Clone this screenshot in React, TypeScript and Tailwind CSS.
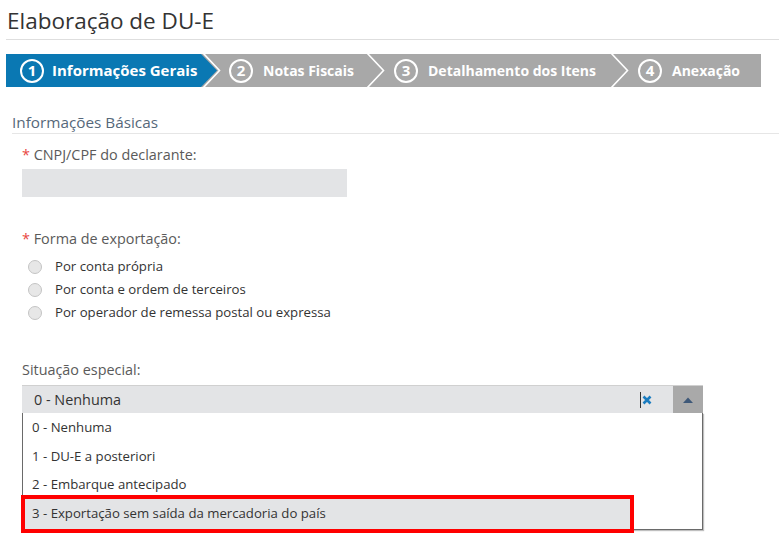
import React from 'react';

const steps = [
  { n: 1, label: 'Informações Gerais' },
  { n: 2, label: 'Notas Fiscais' },
  { n: 3, label: 'Detalhamento dos Itens' },
  { n: 4, label: 'Anexação' },
];

const formas = [
  'Por conta própria',
  'Por conta e ordem de terceiros',
  'Por operador de remessa postal ou expressa',
];

const opcoes = ['0 - Nenhuma', '1 - DU-E a posteriori', '2 - Embarque antecipado'];

function StepCircle({ n }: { n: number }) {
  return (
    <span className="flex h-[24px] w-[24px] shrink-0 items-center justify-center rounded-full border-2 border-white text-[15px] font-bold leading-none">
      {n}
    </span>
  );
}

function Chevron({ first }: { first?: boolean }) {
  return (
    <svg width={first ? 21 : 20} height={33} viewBox={`0 0 ${first ? 21 : 20} 33`} className="shrink-0">
      {first && <polygon points="0,0 16,16.5 0,33" fill="#0a78b3" />}
      <polyline
        points={first ? '2,-1 18.5,16.5 2,34' : '1,-1 17.5,16.5 1,34'}
        fill="none"
        stroke="#ffffff"
        strokeWidth={1.6}
      />
    </svg>
  );
}

export default function App() {
  return (
    <div className="min-h-[533px] w-[779px] overflow-hidden bg-white font-['Open_Sans',sans-serif]">
      {/* title */}
      <div className="ml-[6px] h-[40px] border-b border-[#dedede] pl-[1px] pt-[6px] text-[22.5px] leading-[30px] text-[#333333]">
        Elaboração de DU-E
      </div>

      {/* stepper */}
      <div className="ml-[6px] mt-[14px] flex h-[33px] w-[755px] bg-[#a8a8a8] text-[14px] font-bold text-white">
        <div className="flex w-[195px] items-center gap-[8px] bg-[#0a78b3] pl-[14px]">
          <StepCircle n={1} />
          <span className="text-[15px]">{steps[0].label}</span>
        </div>
        <Chevron first />
        <div className="flex w-[144px] items-center gap-[10px] pl-[7px]">
          <StepCircle n={2} />
          <span>{steps[1].label}</span>
        </div>
        <Chevron />
        <div className="flex w-[224px] items-center gap-[10px] pl-[8px]">
          <StepCircle n={3} />
          <span>{steps[2].label}</span>
        </div>
        <Chevron />
        <div className="flex flex-1 items-center gap-[10px] pl-[8px]">
          <StepCircle n={4} />
          <span>{steps[3].label}</span>
        </div>
      </div>

      {/* section */}
      <div className="ml-[12px] mt-[25px] border-b border-[#e6e6e6] pb-[1px] text-[15.3px] leading-[20px] text-[#56687a]">
        Informações Básicas
      </div>

      <div className="ml-[22px]">
        <div className="mt-[11px] text-[14.4px] leading-[20px] text-[#5a5a5a]">
          <span className="text-[#e8463f]">*</span> CNPJ/CPF do declarante:
        </div>
        <div className="mt-[4px] h-[28px] w-[325px] bg-[#e3e4e6]" />

        <div className="mt-[32px] text-[14.4px] leading-[20px] text-[#5a5a5a]">
          <span className="text-[#e8463f]">*</span> Forma de exportação:
        </div>
        <div className="mt-[6px]">
          {formas.map((f) => (
            <div key={f} className="flex h-[23px] items-center text-[13.2px] text-[#333333]">
              <span className="ml-[6px] h-[14px] w-[14px] rounded-full border border-[#c4c4c4] bg-[#e7e7e7]" />
              <span className="ml-[13px]">{f}</span>
            </div>
          ))}
        </div>

        <div className="mt-[36px] text-[14.4px] leading-[20px] text-[#5a5a5a]">Situação especial:</div>

        {/* select */}
        <div className="mt-[5px] flex h-[28px] w-[681px] items-stretch border-t border-[#d0d0d0] bg-[#e3e4e6]">
          <div className="flex flex-1 items-center pl-[12px] text-[14.4px] text-[#333333]">0 - Nenhuma</div>
          <div className="flex items-center pr-[21px]">
            <span className="h-[16px] w-px bg-[#333333]" />
            <svg width="10" height="10" viewBox="0 0 10 10" className="ml-[1px]">
              <path d="M1.5 1.5 L8.5 8.5 M8.5 1.5 L1.5 8.5" stroke="#1a7cc0" strokeWidth="2.6" strokeLinecap="butt" />
            </svg>
          </div>
          <div className="flex w-[30px] items-center justify-center bg-[#a9a9a9]">
            <svg width="10" height="6" viewBox="0 0 10 6">
              <polygon points="0,6 5,0.5 10,6" fill="#3e5878" />
            </svg>
          </div>
        </div>

        {/* dropdown list */}
        <div className="w-[681px] border-x border-b border-[#6a6a6a] bg-white pt-[1px] shadow-[1px_1px_1px_rgba(0,0,0,0.25)]">
          {opcoes.map((o) => (
            <div key={o} className="flex h-[28.5px] items-center pl-[9px] text-[13.2px] text-[#333333]">
              {o}
            </div>
          ))}
          <div className="relative z-10 -mb-[4px] -ml-[2px] -mt-[5px] flex h-[38px] w-[613px] items-center border-4 border-[#ff0000] bg-[#e3e4e6] pl-[7px] text-[13.2px] text-[#333333]">
            3 - Exportação sem saída da mercadoria do país
          </div>
        </div>
      </div>
    </div>
  );
}
